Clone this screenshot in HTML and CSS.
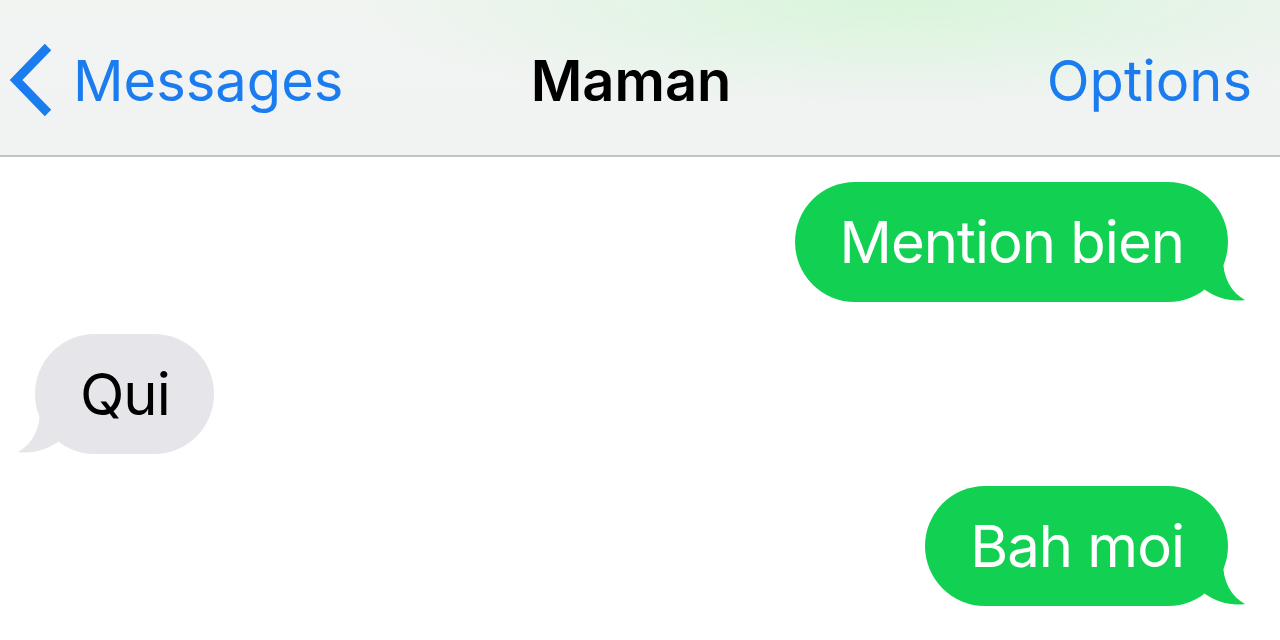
FILE: index.html
```html
<!DOCTYPE html>
<html lang="fr">
<head>
    <meta charset="UTF-8">
    <meta name="viewport" content="width=device-width, initial-scale=1.0">
    <title>Maman</title>
    <link rel="stylesheet" href="styles.css">
</head>
<body>
    <header class="navbar">
        <a class="nav-back" href="#">
            <svg class="chevron" width="46" height="74" viewBox="0 0 46 74">
                <path d="M40 4 L8 37 L40 70" fill="none" stroke="#1b7cf0" stroke-width="9" stroke-linecap="butt" stroke-linejoin="miter"/>
            </svg>
            <span>Messages</span>
        </a>
        <h1 class="nav-title">Maman</h1>
        <a class="nav-options" href="#">Options</a>
    </header>

    <main class="thread">
        <div class="row sent">
            <div class="bubble green">Mention bien
                <svg class="tail tail-right" width="44" height="44" viewBox="0 0 44 44">
                    <path d="M0 0 L22 0 C22 20 30 34 44 42 C30 44 16 40 4 32 Z" fill="#12d152"/>
                </svg>
            </div>
        </div>
        <div class="row received">
            <div class="bubble grey">Qui
                <svg class="tail tail-left" width="44" height="44" viewBox="0 0 44 44">
                    <path d="M44 0 L22 0 C22 20 14 34 0 42 C14 44 28 40 40 32 Z" fill="#e5e5ea"/>
                </svg>
            </div>
        </div>
        <div class="row sent">
            <div class="bubble green">Bah moi
                <svg class="tail tail-right" width="44" height="44" viewBox="0 0 44 44">
                    <path d="M0 0 L22 0 C22 20 30 34 44 42 C30 44 16 40 4 32 Z" fill="#12d152"/>
                </svg>
            </div>
        </div>
    </main>
</body>
</html>
```

FILE: styles.css
```css
body {
    margin: 0;
    padding: 0;
    width: 1280px;
    height: 640px;
    overflow: hidden;
    background: #ffffff;
    font-family: Inter, "Noto Sans", sans-serif;
}

.navbar {
    height: 155px;
    display: flex;
    align-items: center;
    justify-content: space-between;
    padding: 0 28px 0 8px;
    border-bottom: 2px solid #c4c4c6;
    background:
        radial-gradient(ellipse 560px 110px at 900px 0px, rgba(215, 245, 218, 0.95), rgba(235, 245, 236, 0) 100%),
        linear-gradient(#f2f4f2, #f1f2f2);
    position: relative;
}
.nav-back {
    display: flex;
    align-items: center;
    gap: 19px;
    color: #1b7cf0;
    text-decoration: none;
    font-size: 56px;
    padding-top: 6px;
}
.nav-back .chevron {
    margin-top: -2px;
}
.nav-title {
    position: absolute;
    left: 0;
    right: 18px;
    margin: 0;
    padding-top: 6px;
    text-align: center;
    font-size: 56px;
    font-weight: 600;
    color: #000;
    pointer-events: none;
}
.nav-options {
    color: #1b7cf0;
    text-decoration: none;
    font-size: 56px;
    padding-top: 6px;
}

.thread {
    display: flex;
    flex-direction: column;
    gap: 32px;
    padding: 25px 52px 0 35px;
}
.row {
    display: flex;
}
.row.sent {
    justify-content: flex-end;
}
.row.received {
    justify-content: flex-start;
}
.bubble {
    position: relative;
    height: 120px;
    box-sizing: border-box;
    padding: 0 44px 0 45px;
    border-radius: 60px;
    display: flex;
    align-items: center;
    font-size: 58px;
    letter-spacing: -1px;
}
.bubble.green {
    background: #12d152;
    color: #ffffff;
}
.bubble.grey {
    background: #e5e5ea;
    color: #000000;
}
.tail {
    position: absolute;
    bottom: 0;
}
.tail-right {
    right: -17px;
}
.tail-left {
    left: -17px;
}
```
